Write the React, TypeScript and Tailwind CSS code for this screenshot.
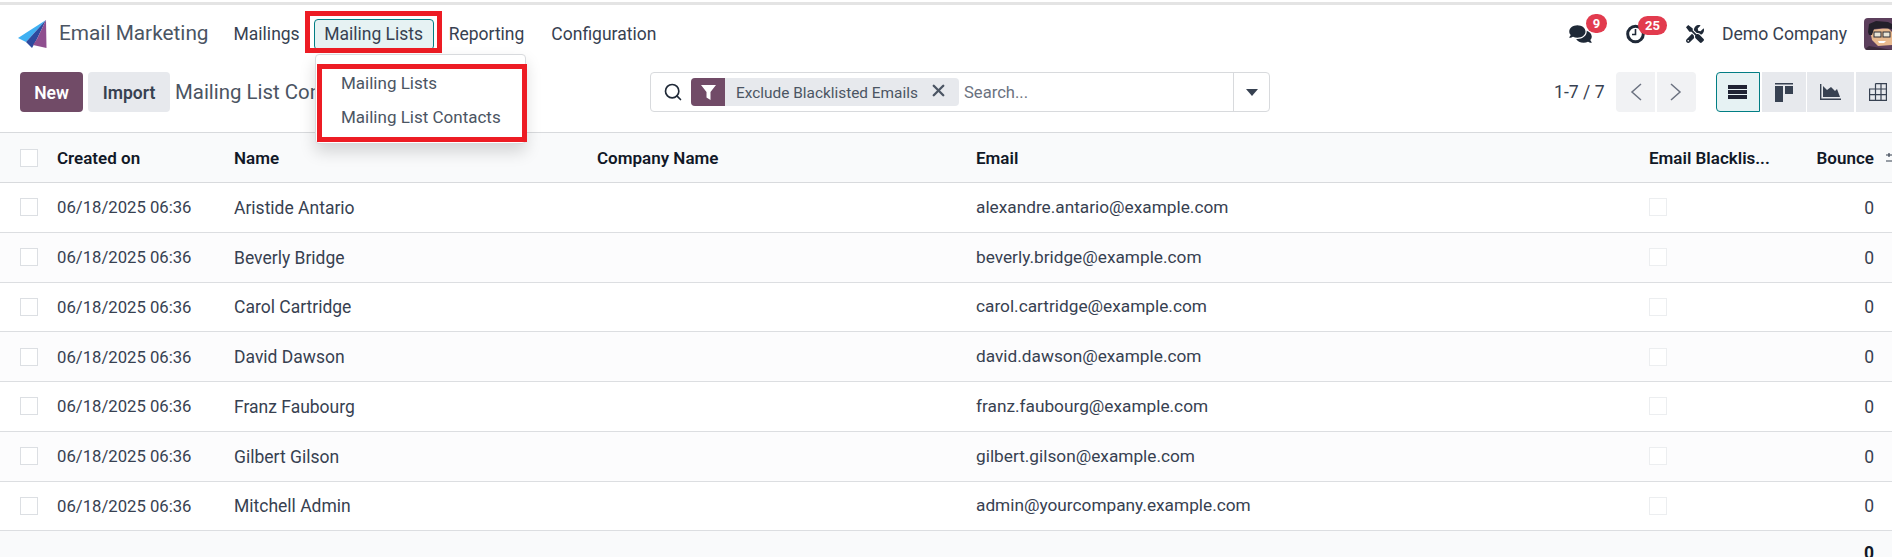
import { Search, X } from 'lucide-react';
import { FaComments, FaTools } from 'react-icons/fa';

const rows = [
    ['Aristide Antario', 'alexandre.antario@example.com'],
    ['Beverly Bridge', 'beverly.bridge@example.com'],
    ['Carol Cartridge', 'carol.cartridge@example.com'],
    ['David Dawson', 'david.dawson@example.com'],
    ['Franz Faubourg', 'franz.faubourg@example.com'],
    ['Gilbert Gilson', 'gilbert.gilson@example.com'],
    ['Mitchell Admin', 'admin@yourcompany.example.com'],
];

const cols = 'grid grid-cols-[57px_177px_363px_379px_673px_141px_84px_18px] items-center';

function Logo() {
    return (
        <svg width="30" height="29" viewBox="0 0 30 29">
            <polygon points="0,18 28,0 8,22" fill="#3fb0f2" />
            <polygon points="8,22 28,0 19,19 14,28" fill="#2d4a9e" />
            <polygon points="28,0 28.5,28 15,25 19,19" fill="#8f4f8f" />
        </svg>
    );
}

function Avatar() {
    return (
        <svg width="28" height="32" viewBox="0 0 28 32" className="rounded-l-[4px]">
            <rect width="28" height="32" fill="#5c3f5c" />
            <path d="M5 28 L28 32 L0 32 Z" fill="#3b2a3b" />
            <path d="M6 12 L24 10 L28 14 L28 27 L14 28 L8 22 Z" fill="#e8b98e" />
            <path d="M4 14 L5 6 L12 3 L24 4 L28 6 L28 11 L18 10 L10 11 L8 17 L5 17 Z" fill="#23202a" />
            <rect x="10" y="14" width="7" height="5" fill="#e9e4d6" stroke="#2a2a30" strokeWidth="1" />
            <rect x="19" y="14" width="7" height="5" fill="#e9e4d6" stroke="#2a2a30" strokeWidth="1" />
            <path d="M14 23 L22 23 L20 25 L15 25 Z" fill="#fff" />
        </svg>
    );
}

function Check({ faint }: { faint?: boolean }) {
    return <div className={`h-[18px] w-[18px] border bg-white ${faint ? 'border-[#eceef0]' : 'border-[#dcdfe3]'}`} />;
}

export default function App() {
    return (
        <div className="relative h-[557px] w-[1892px] overflow-hidden bg-white font-[Roboto,sans-serif] text-[17.5px] text-[#374151]">
            <div className="mt-[2px] h-[3px] bg-[#e4e4e4]" />

            {/* Top nav */}
            <nav className="flex h-[58px] items-center">
                <div className="ml-[18px] w-[30px]">
                    <Logo />
                </div>
                <span className="ml-[11px] text-[20.8px] text-[#4b5563]">Email Marketing</span>
                <span className="ml-[25px]">Mailings</span>
                <span className="ml-[14px] flex h-[31px] w-[120px] items-center justify-center rounded-[4px] border border-[#017e84] bg-[#e6f2f3]">
                    Mailing Lists
                </span>
                <span className="ml-[15px]">Reporting</span>
                <span className="ml-[27px]">Configuration</span>

                <div className="ml-auto flex items-center">
                    <div className="relative mr-[34px] h-[20px] w-[23px]">
                        <FaComments className="h-[20px] w-[23px] text-[#1f2937]" />
                        <span className="absolute -top-[10px] left-[17px] flex h-[19px] w-[21px] items-center justify-center rounded-full bg-[#e23b4e] text-[13px] font-bold text-white">
                            9
                        </span>
                    </div>
                    <div className="relative mr-[41px] h-[20px] w-[19px]">
                        <svg width="19" height="20" viewBox="0 0 19 20" fill="none" stroke="#1f2937">
                            <circle cx="9.5" cy="10" r="7.8" strokeWidth="3" />
                            <path d="M9.5 5 V10.5 H6" strokeWidth="1.6" />
                        </svg>
                        <span className="absolute -top-[8px] left-[12px] flex h-[19px] w-[29px] items-center justify-center rounded-full bg-[#e23b4e] text-[13px] font-bold text-white">
                            25
                        </span>
                    </div>
                    <FaTools className="mr-[18px] h-[18px] w-[18px] text-[#1f2937]" />
                    <span className="mr-[17px] text-[17.6px]">Demo Company</span>
                    <Avatar />
                </div>
            </nav>

            {/* Control panel */}
            <div className="flex h-[69px] items-start pt-[9px]">
                <button className="ml-[20px] h-[40px] w-[63px] shrink-0 rounded-[4px] bg-[#714b67] pt-[2px] font-semibold text-white">New</button>
                <button className="ml-[5px] h-[40px] w-[82px] shrink-0 rounded-[4px] bg-[#e7e9ed] pt-[2px] font-semibold text-[#374151]">Import</button>
                <div className="ml-[5px] h-[40px] w-[141px] shrink-0 whitespace-nowrap text-[20.4px] leading-[40px] text-[#4b5563]">
                    Mailing List Contacts
                </div>

                <div className="ml-[334px] flex h-[40px] w-[620px] shrink-0 items-center rounded-[4px] border border-[#d8dadd]">
                    <Search className="ml-[12px] h-[20px] w-[20px] text-[#1f2937]" strokeWidth={2} />
                    <div className="ml-[8px] flex h-[28px] w-[268px] items-center overflow-hidden rounded-[4px] bg-[#e7e9ed]">
                        <span className="flex h-[28px] w-[34px] items-center justify-center bg-[#714b67]">
                            <svg width="15" height="15" viewBox="0 0 15 15">
                                <path d="M0 0 H15 L9.5 7 V15 L5.5 12.5 V7 Z" fill="#fff" />
                            </svg>
                        </span>
                        <span className="ml-[11px] mt-[3px] text-[15.4px] text-[#4b5563]">Exclude Blacklisted Emails</span>
                        <X className="-mt-[3px] ml-[11px] h-[19px] w-[19px] text-[#4b5563]" strokeWidth={3} />
                    </div>
                    <span className="ml-[5px] mt-[3px] text-[16.6px] text-[#6b7280]">Search...</span>
                    <div className="ml-auto flex h-full w-[36px] items-center justify-center border-l border-[#d8dadd]">
                        <svg width="12" height="7" viewBox="0 0 12 7">
                            <path d="M0 0 H12 L6 7 Z" fill="#374151" />
                        </svg>
                    </div>
                </div>

                <span className="ml-[284px] w-[50px] shrink-0 whitespace-nowrap text-[17.6px] leading-[40px]">1-7 / 7</span>
                <div className="ml-[12px] flex shrink-0 gap-[1.5px]">
                    <span className="flex h-[40px] w-[39px] items-center justify-center rounded-l-[4px] bg-[#f1f2f4]">
                        <svg width="12" height="18" viewBox="0 0 12 18" fill="none" stroke="#6b7280" strokeWidth="1.5">
                            <path d="M11 1 L2 9 L11 17" />
                        </svg>
                    </span>
                    <span className="flex h-[40px] w-[39px] items-center justify-center rounded-r-[4px] bg-[#f1f2f4]">
                        <svg width="12" height="18" viewBox="0 0 12 18" fill="none" stroke="#6b7280" strokeWidth="1.5">
                            <path d="M1 1 L10 9 L1 17" />
                        </svg>
                    </span>
                </div>

                <div className="ml-[20px] flex shrink-0 gap-[2px]">
                    <span className="flex h-[40px] w-[44px] items-center justify-center rounded-l-[4px] border border-[#017e84] bg-[#e6f2f3]">
                        <svg width="19" height="14" viewBox="0 0 19 14" fill="#1f2333">
                            <rect width="19" height="4" />
                            <rect y="5" width="19" height="4" />
                            <rect y="10" width="19" height="4" />
                        </svg>
                    </span>
                    <span className="flex h-[40px] w-[44px] items-center justify-center bg-[#e7e9ed]">
                        <svg width="18" height="19" viewBox="0 0 18 19" fill="#374151">
                            <rect width="18" height="1.5" />
                            <rect y="3" width="8" height="16" />
                            <rect x="10" y="3" width="8" height="8" />
                        </svg>
                    </span>
                    <span className="-ml-[1px] flex h-[40px] w-[47px] items-center justify-center bg-[#e7e9ed]">
                        <svg width="21" height="16" viewBox="0 0 21 16" fill="#374151">
                            <path d="M3 13 V2 L7 6 L11 3 L15 7 L17 5 L20 13 Z" />
                            <path d="M.7 0 V15.3 H21" fill="none" stroke="#374151" strokeWidth="1.4" />
                        </svg>
                    </span>
                    <span className="flex h-[40px] w-[36px] items-center bg-[#e7e9ed] pl-[13px]">
                        <svg width="18" height="18" viewBox="0 0 18 18" fill="none" stroke="#374151" strokeWidth="1.2" className="shrink-0">
                            <path d="M6.5 .6 H17.4 V17.4 H.6 V6 H17.4 M.6 11.7 H17.4 M6.5 .6 V17.4 M12 .6 V17.4" />
                        </svg>
                    </span>
                </div>
            </div>

            {/* Table */}
            <div className={`${cols} h-[51px] border-y border-[#d8dadd] bg-[#f9fafb] text-[17px] font-semibold text-[#111827]`}>
                <div className="pl-[20px]">
                    <Check />
                </div>
                <span className="pt-[2px]">Created on</span>
                <span className="pt-[2px]">Name</span>
                <span className="pt-[2px]">Company Name</span>
                <span className="pt-[2px]">Email</span>
                <span className="pt-[2px]">Email Blacklis...</span>
                <span className="pt-[2px] text-right">Bounce</span>
                <svg width="12" height="12" viewBox="0 0 12 12" fill="none" stroke="#374151" strokeWidth="1.2" className="ml-[12px]">
                    <path d="M0 3 H12 M0 9 H12 M3 1 V5 M8 7 V11" />
                </svg>
            </div>
            {rows.map(([name, email], i) => (
                <div key={email} className={`${cols} h-[49.75px] border-b border-[#dcdee1] ${i % 2 ? 'bg-[#fcfcfd]' : 'bg-white'}`}>
                    <div className="pl-[20px]">
                        <Check />
                    </div>
                    <span className="pt-[1px] text-[16.7px]">06/18/2025 06:36</span>
                    <span className="pt-[1px]">{name}</span>
                    <span />
                    <span className="pt-[1px] text-[17.25px]">{email}</span>
                    <Check faint />
                    <span className="pt-[1px] text-right">0</span>
                </div>
            ))}
            <div className={`${cols} h-[40px] bg-[#f9fafb] pt-[3px] font-bold text-[#111827]`}>
                <span className="col-start-7 text-right">0</span>
            </div>

            {/* Mailing Lists menu and the red marks drawn over the shot */}
            <div className="absolute left-[305px] top-[11px] h-[42px] w-[137px] border-[5px] border-[#ed1c24]" />
            <div className="absolute left-[315px] top-[54px] h-[90px] w-[211px] rounded-[4px] border border-[#d8dadd] bg-white text-[17px] shadow-[0_8px_16px_rgba(0,0,0,0.15)]">
                <div className="pl-[25px] pt-[16px] leading-[24px] text-[#4b5563]">Mailing Lists</div>
                <div className="pl-[25px] pt-[10px] leading-[24px] text-[#4b5563]">Mailing List Contacts</div>
            </div>
            <div className="absolute left-[317px] top-[64px] h-[78px] w-[210px] border-[5px] border-[#ed1c24]" />
        </div>
    );
}
